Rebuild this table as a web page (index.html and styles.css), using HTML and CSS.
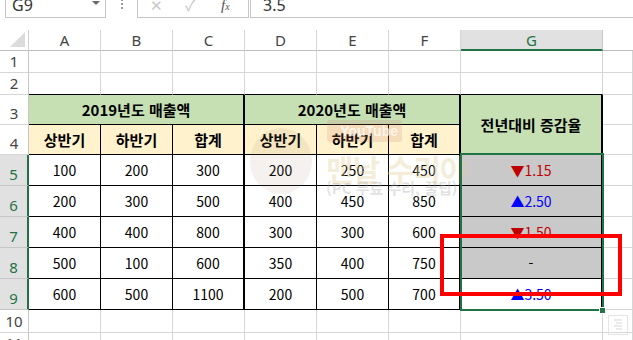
FILE: index.html
```html
<!DOCTYPE html>
<html lang="ko">
<head>
<meta charset="utf-8">
<title>Sheet</title>
<link rel="stylesheet" href="styles.css">
</head>
<body>
<div class="fbar">
  <div class="namebox"><span class="nb-text">G9</span><span class="nb-arrow"></span></div>
  <div class="dots"><i></i><i></i><i></i></div>
  <div class="fxbox">
    <span class="fx-x">✕</span>
    <span class="fx-ok">✓</span>
    <span class="fx-f">f<span class="fx-sub">x</span></span>
  </div>
  <div class="finput">3.5</div>
</div>

<div class="sheet">
  <!-- column headers -->
  <div class="corner"><span class="corner-tri"></span></div>
  <div class="ch">A</div><div class="ch">B</div><div class="ch">C</div><div class="ch">D</div><div class="ch">E</div><div class="ch">F</div><div class="ch ch-sel">G</div><div class="ch ch-rest"></div>

  <!-- row 1 -->
  <div class="rh">1</div>
  <div class="c"></div><div class="c"></div><div class="c"></div><div class="c"></div><div class="c"></div><div class="c"></div><div class="c"></div><div class="c"></div>

  <!-- row 2 -->
  <div class="rh">2</div>
  <div class="c bb"></div><div class="c bb"></div><div class="c bb"></div><div class="c bb"></div><div class="c bb"></div><div class="c bb"></div><div class="c bb"></div><div class="c"></div>

  <!-- row 3 -->
  <div class="rh">3</div>
  <div class="t hg tk span3">2019년도 매출액</div>
  <div class="t hg tk span3">2020년도 매출액</div>
  <div class="t hg tk span2r">전년대비 증감율</div>
  <div class="c"></div>

  <!-- row 4 -->
  <div class="rh">4</div>
  <div class="t hy">상반기</div><div class="t hy">하반기</div><div class="t hy tk">합계</div>
  <div class="t hy">상반기</div><div class="t hy">하반기</div><div class="t hy tk">합계</div>
  <div class="c"></div>

  <!-- row 5 -->
  <div class="rh rh-sel">5</div>
  <div class="t">100</div><div class="t">200</div><div class="t tk">300</div>
  <div class="t">200</div><div class="t">250</div><div class="t tk">450</div>
  <div class="t tk gr"><span class="dn">▼1.15</span></div>
  <div class="c"></div>

  <!-- row 6 -->
  <div class="rh rh-sel">6</div>
  <div class="t">200</div><div class="t">300</div><div class="t tk">500</div>
  <div class="t">400</div><div class="t">450</div><div class="t tk">850</div>
  <div class="t tk gr"><span class="up">▲2.50</span></div>
  <div class="c"></div>

  <!-- row 7 -->
  <div class="rh rh-sel">7</div>
  <div class="t">400</div><div class="t">400</div><div class="t tk">800</div>
  <div class="t">300</div><div class="t">300</div><div class="t tk">600</div>
  <div class="t tk gr"><span class="dn">▼1.50</span></div>
  <div class="c"></div>

  <!-- row 8 -->
  <div class="rh rh-sel">8</div>
  <div class="t">500</div><div class="t">100</div><div class="t tk">600</div>
  <div class="t">350</div><div class="t">400</div><div class="t tk">750</div>
  <div class="t tk gr">-</div>
  <div class="c"></div>

  <!-- row 9 -->
  <div class="rh rh-sel">9</div>
  <div class="t">600</div><div class="t">500</div><div class="t tk">1100</div>
  <div class="t">200</div><div class="t">500</div><div class="t tk">700</div>
  <div class="t tk"><span class="up">▲3.50</span></div>
  <div class="c"></div>

  <!-- row 10 -->
  <div class="rh">10</div>
  <div class="c"></div><div class="c"></div><div class="c"></div><div class="c"></div><div class="c"></div><div class="c"></div><div class="c"></div><div class="c"></div>

  <!-- row 11 -->
  <div class="rh">11</div>
  <div class="c"></div><div class="c"></div><div class="c"></div><div class="c"></div><div class="c"></div><div class="c"></div><div class="c"></div><div class="c"></div>
</div>

<!-- overlays -->
<div class="wm">
  <div class="wm-circle"></div>
  <div class="wm-yt">YouTube</div>
  <div class="wm-title">맨날 수리야</div>
  <div class="wm-sub">(PC 무료 수리, 꿀팁)</div>
</div>
<div class="selection"><span class="handle"></span></div>
<div class="redbox"></div>
<svg class="qa" width="22" height="22" viewBox="0 0 22 22">
  <rect x="1.5" y="1.5" width="19" height="19" fill="none" stroke="#e4e4e4"/>
  <path d="M7 6h8M9 9h6M7 12h8M9 15h6" stroke="#e4e4e4" stroke-width="1.5"/>
</svg>
</body>
</html>
```

FILE: styles.css
```css
* { box-sizing: border-box; }
html, body {
  margin: 0;
  padding: 0;
  background: #ffffff;
  width: 633px;
  height: 340px;
  overflow: hidden;
  position: relative;
  font-family: "Noto Sans", "Noto Sans CJK KR", sans-serif;
}

/* formula bar */
.fbar {
  height: 30px;
  display: flex;
  align-items: flex-start;
  background: #ffffff;
}
.namebox {
  margin-left: 5px;
  margin-top: -8px;
  width: 101px;
  height: 26px;
  border: 1px solid #c6c6c6;
  display: flex;
  align-items: center;
  justify-content: space-between;
  padding: 0 5px 0 6px;
  background: #fff;
}
.nb-text {
  font-size: 16px;
  color: #333;
  line-height: 26px;
}
.nb-arrow {
  width: 0;
  height: 0;
  border-left: 4px solid transparent;
  border-right: 4px solid transparent;
  border-top: 4px solid #6a6a6a;
  margin-top: -4px;
}
.dots {
  width: 31px;
  display: flex;
  flex-direction: column;
  align-items: center;
  gap: 2px;
  padding-top: 0;
  margin-top: -1px;
}
.dots i {
  display: block;
  width: 2px;
  height: 2px;
  background: #9a9a9a;
}
.fxbox {
  margin-top: -8px;
  width: 112px;
  height: 26px;
  border: 1px solid #c6c6c6;
  position: relative;
  background: #fff;
}
.fx-x, .fx-ok, .fx-f {
  position: absolute;
  top: 0;
  line-height: 24px;
}
.fx-x { left: 12px; color: #c8c8c8; font-size: 15px; }
.fx-ok { left: 47px; color: #c8c8c8; font-size: 16px; }
.fx-f {
  left: 83px;
  color: #555;
  font-family: "Liberation Serif", serif;
  font-style: italic;
  font-size: 15px;
}
.fx-sub { font-size: 10px; }
.finput {
  margin-left: 1px;
  margin-top: -8px;
  flex: 1;
  height: 26px;
  border: 1px solid #c6c6c6;
  margin-right: -5px;
  padding-left: 12px;
  font-size: 16px;
  color: #333;
  line-height: 24px;
}

/* sheet grid */
.sheet {
  display: grid;
  grid-template-columns: 29px 72px 72px 72px 72px 72px 72px 142px 1fr;
  grid-template-rows: 21px 22px 22px 30px 30px 31px 31px 31px 31px 31px 23px 1fr;
  height: 310px;
}
.corner {
  position: relative;
  border-right: 1px solid #d0d0d0;
  border-bottom: 1px solid #bdbdbd;
}
.corner-tri {
  position: absolute;
  right: 3px;
  bottom: 3px;
  width: 0;
  height: 0;
  border-left: 15px solid transparent;
  border-bottom: 15px solid #dcdcdc;
}
.ch {
  border-right: 1px solid #d6d6d6;
  border-bottom: 1px solid #bdbdbd;
  display: flex;
  align-items: center;
  justify-content: center;
  font-size: 15px;
  color: #444;
  line-height: 20px;
}
.ch-sel {
  background: #e1e1e1;
  border-bottom: 2px solid #217346;
  border-right-color: #c6c6c6;
  color: #217346;
}
.ch-rest { border-right: none; }

.rh {
  border-right: 1px solid #c6c6c6;
  border-bottom: 1px solid #d6d6d6;
  display: flex;
  align-items: flex-end;
  justify-content: center;
  font-size: 15px;
  line-height: 20px;
  color: #444;
  padding-bottom: 1px;
}
.rh-sel {
  background: #e1e1e1;
  border-right: 2px solid #217346;
  border-bottom-color: #c6c6c6;
  color: #217346;
}

.c {
  border-right: 1px solid #d6d6d6;
  border-bottom: 1px solid #d6d6d6;
}
.c.bb { border-bottom-color: #000; }

.t {
  border-right: 1px solid #000;
  border-bottom: 1px solid #000;
  display: flex;
  align-items: center;
  justify-content: center;
  font-family: "Noto Sans CJK KR", "Noto Sans", sans-serif;
  font-size: 14px;
  color: #000;
  background: #fff;
}
.t.tk { border-right-width: 2px; }
.hg {
  background: #c6e0b4;
  font-weight: 700;
  font-size: 15px;
}
.hy {
  background: #fff2cc;
  font-weight: 700;
  font-size: 15px;
}
.span3 { grid-column: span 3; }
.span2r { grid-row: span 2; }
.gr { background: #c9c9c9; }
.dn { color: #c00000; }
.up { color: #0000ff; }

/* overlays */
.selection {
  position: absolute;
  left: 460px;
  top: 153px;
  width: 144px;
  height: 158px;
  border: 2px solid #217346;
  pointer-events: none;
}
.handle {
  position: absolute;
  right: -4px;
  bottom: -5px;
  width: 7px;
  height: 7px;
  background: #217346;
  border: 1px solid #fff;
}
.redbox {
  position: absolute;
  left: 440px;
  top: 234px;
  width: 182px;
  height: 62px;
  border: 4px solid #ff0000;
}
.qa {
  position: absolute;
  left: 607px;
  top: 314px;
}

.wm {
  position: absolute;
  left: 0;
  top: 0;
  pointer-events: none;
}
.wm-circle {
  position: absolute;
  left: 250px;
  top: 128px;
  width: 62px;
  height: 66px;
  border-radius: 50%;
  background: rgba(150, 120, 100, 0.10);
}
.wm-yt {
  position: absolute;
  left: 327px;
  top: 120px;
  width: 75px;
  height: 22px;
  background: rgba(200, 120, 110, 0.18);
  border-radius: 3px;
  color: rgba(255, 255, 255, 0.7);
  font-family: "Liberation Sans", sans-serif;
  font-weight: 700;
  font-size: 14px;
  line-height: 22px;
  text-align: right;
  padding-right: 4px;
}
.wm-title {
  position: absolute;
  left: 326px;
  top: 148px;
  font-family: "Noto Sans CJK KR", sans-serif;
  font-weight: 700;
  font-size: 30px;
  line-height: 40px;
  color: rgba(225, 205, 150, 0.35);
  letter-spacing: -1px;
  white-space: nowrap;
}
.wm-sub {
  position: absolute;
  left: 326px;
  top: 178px;
  font-family: "Noto Sans CJK KR", sans-serif;
  font-weight: 700;
  font-size: 15px;
  line-height: 20px;
  color: rgba(170, 170, 170, 0.35);
  white-space: nowrap;
}
```
